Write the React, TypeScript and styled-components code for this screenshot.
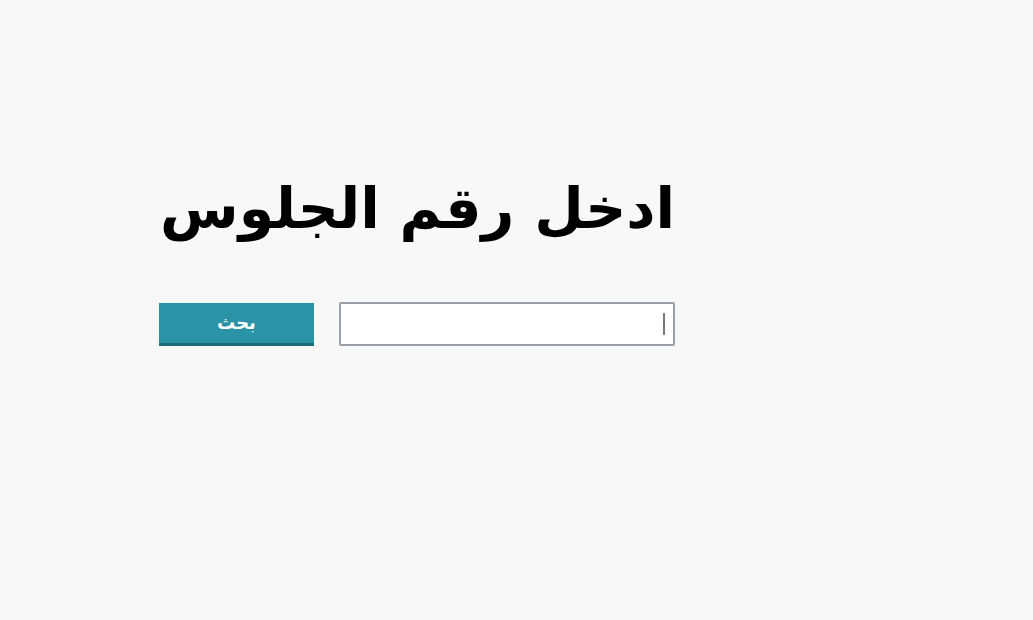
import * as React from "react";
import styled, { createGlobalStyle } from "styled-components";

const GlobalStyle = createGlobalStyle`
  html, body {
    margin: 0;
    padding: 0;
    background: #f8f8f8;
  }
  body {
    font-family: "DejaVu Sans", "Noto Sans", sans-serif;
  }
`;

const Page = styled.div`
  width: 1033px;
  height: 620px;
  background: #f8f8f8;
  box-sizing: border-box;
  padding: 168px 0 0 159px;
`;

const SearchBox = styled.form`
  width: 516px;
  display: flex;
  flex-direction: column;
  direction: rtl;
`;

const Title = styled.h1`
  margin: 0;
  font-family: "DejaVu Sans", sans-serif;
  font-weight: bold;
  font-size: 57px;
  line-height: 80px;
  color: #000;
  text-align: right;
`;

const Row = styled.div`
  display: flex;
  align-items: center;
  gap: 25px;
  margin-top: 54px;
`;

const FieldWrap = styled.div`
  position: relative;
  width: 336px;
  height: 44px;
`;

const Field = styled.input`
  width: 100%;
  height: 100%;
  box-sizing: border-box;
  border: 2px solid #9b9dab;
  border-radius: 2px;
  background: #fff;
  outline: none;
  padding: 0 10px;
  font-size: 16px;
  font-family: "DejaVu Sans", sans-serif;
`;

const Caret = styled.span`
  position: absolute;
  top: 11px;
  right: 10px;
  width: 2px;
  height: 22px;
  background: #777;
`;

const SubmitButton = styled.button`
  width: 155px;
  height: 43px;
  border: none;
  border-bottom: 3px solid #1f6b78;
  border-radius: 0;
  background: #2b93a6;
  color: #fff;
  font-family: "DejaVu Sans", sans-serif;
  font-weight: bold;
  font-size: 18px;
  cursor: pointer;
`;

const App: React.FC = () => {
  return (
    <React.Fragment>
      <GlobalStyle />
      <Page>
        <SearchBox onSubmit={(e) => e.preventDefault()}>
          <Title>ادخل رقم الجلوس</Title>
          <Row>
            <FieldWrap>
              <Field type="text" />
              <Caret />
            </FieldWrap>
            <SubmitButton type="submit">بحث</SubmitButton>
          </Row>
        </SearchBox>
      </Page>
    </React.Fragment>
  );
};

export default App;
